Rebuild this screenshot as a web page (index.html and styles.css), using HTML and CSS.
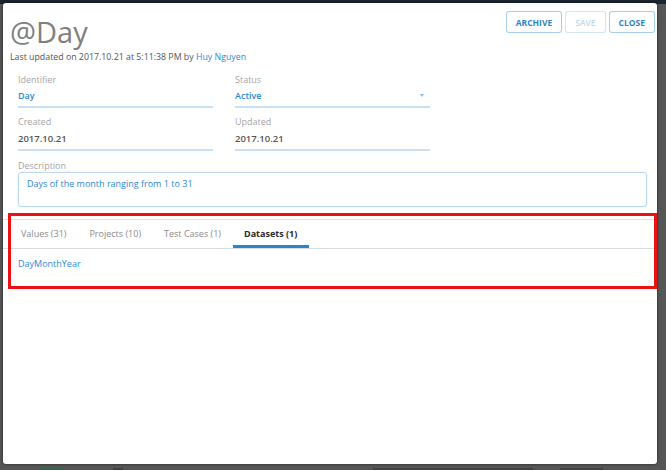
FILE: index.html
```html
<!DOCTYPE html>
<html>
<head>
<meta charset="utf-8">
<link rel="stylesheet" href="styles.css">
</head>
<body>
<div class="page">
  <div class="page-header"></div>
  <div class="page-row">
    <span class="pr-bar pr-status"></span>
    <span class="pr-bar pr-type"></span>
    <span class="pr-bar pr-desc"></span>
    <span class="pr-bar pr-date"></span>
  </div>
</div>

<div class="modal">
  <div class="modal-header">
    <div class="heading">
      <h1 class="title">@Day</h1>
      <p class="meta">Last updated on 2017.10.21 at 5:11:38 PM by <a class="link">Huy Nguyen</a></p>
    </div>
    <div class="actions">
      <button class="btn">ARCHIVE</button>
      <button class="btn btn-disabled">SAVE</button>
      <button class="btn">CLOSE</button>
    </div>
  </div>

  <div class="form">
    <div class="field">
      <div class="label">Identifier</div>
      <div class="value value-blue">Day</div>
    </div>
    <div class="field">
      <div class="label">Status</div>
      <div class="value value-blue select">Active<span class="caret"></span></div>
    </div>
    <div class="spacer"></div>
    <div class="field">
      <div class="label">Created</div>
      <div class="value value-dark">2017.10.21</div>
    </div>
    <div class="field">
      <div class="label">Updated</div>
      <div class="value value-dark">2017.10.21</div>
    </div>
    <div class="spacer"></div>
    <div class="field field-wide">
      <div class="label">Description</div>
      <div class="textarea">Days of the month ranging from 1 to 31</div>
    </div>
  </div>

  <div class="tabs">
    <div class="tab">Values (31)</div>
    <div class="tab">Projects (10)</div>
    <div class="tab">Test Cases (1)</div>
    <div class="tab tab-active">Datasets (1)</div>
  </div>
  <div class="tab-content">
    <a class="link">DayMonthYear</a>
  </div>

  <div class="highlight"></div>
</div>
</body>
</html>
```

FILE: styles.css
```css
html, body {
  margin: 0;
  padding: 0;
}
body {
  width: 666px;
  height: 470px;
  overflow: hidden;
  background: #565656;
  font-family: "Open Sans", "Liberation Sans", sans-serif;
  position: relative;
}
.page {
  height: 470px;
  display: flex;
  flex-direction: column;
}
.page-header {
  height: 4px;
  background: #1a2530;
}
.page-row {
  margin-top: auto;
  height: 4px;
  display: flex;
  align-items: flex-end;
  padding-left: 40px;
}
.pr-bar {
  height: 2px;
  background: #3c3c3c;
  opacity: 0.8;
}
.pr-status { background: #2a6a50; width: 23px; margin-right: 50px; }
.pr-type { width: 10px; margin-right: 250px; }
.pr-desc { width: 160px; margin-right: 27px; }
.pr-date { width: 43px; }

.modal {
  position: absolute;
  left: 3px;
  top: 3px;
  width: 654px;
  height: 461px;
  background: #fff;
  border-radius: 3px;
  box-shadow: 0 0 3px rgba(0,0,0,0.6);
}
.modal-header {
  display: flex;
  justify-content: space-between;
  align-items: flex-start;
  padding: 8px 2px 0 7px;
}
.title {
  margin: 6px 0 0 0;
  font-size: 29px;
  line-height: 29px;
  font-weight: 400;
  color: #808080;
}
.meta {
  margin: 5px 0 0 0;
  font-size: 8.8px;
  line-height: 12px;
  color: #555;
}
.link {
  color: #2d89d3;
  text-decoration: none;
}
.actions {
  display: flex;
  gap: 3px;
}
.btn {
  height: 22px;
  padding: 0 9px;
  border: 1px solid #a9cdee;
  border-radius: 3px;
  background: #fff;
  font-family: "Open Sans", "Liberation Sans", sans-serif;
  font-size: 8.5px;
  font-weight: 700;
  color: #2f86c9;
  box-shadow: 0 0 1px #cfe4f6;
}
.btn-disabled {
  color: #bcd8ef;
  border-color: #d3e6f6;
  font-weight: 600;
  padding: 0 9px;
}

.form {
  display: grid;
  grid-template-columns: 195px 195px 1fr;
  column-gap: 22px;
  row-gap: 8px;
  padding: 0 10px 0 15px;
  margin-top: 10.5px;
}
.field-wide {
  grid-column: 1 / -1;
  margin-top: 1px;
}
.label {
  font-size: 9px;
  line-height: 12px;
  color: #a5a5a5;
}
.value {
  margin-top: 3px;
  font-size: 9px;
  line-height: 14px;
  padding-bottom: 3px;
  border-bottom: 2px solid #c9e0f4;
}
.value-blue {
  color: #2d89d3;
  font-weight: 600;
}
.value-dark {
  margin-top: 4px;
  color: #555;
  font-weight: 600;
  font-size: 9.5px;
}
.select {
  display: flex;
  justify-content: space-between;
  align-items: center;
}
.caret {
  width: 0;
  height: 0;
  margin-right: 6px;
  border-left: 2.5px solid transparent;
  border-right: 2.5px solid transparent;
  border-top: 3px solid #8dbde6;
}
.textarea {
  margin-top: 0;
  height: 23px;
  border: 1px solid #bcd8f0;
  border-radius: 3px;
  padding: 5px 8px;
  font-size: 9px;
  line-height: 12px;
  color: #2d89d3;
  box-shadow: 0 0 2px #d7e8f7;
}

.tabs {
  margin-top: 12px;
  display: flex;
  padding-left: 6.5px;
  border-top: 1px solid #dfe3e7;
  border-bottom: 1px solid #d7dde3;
}
.tab {
  padding: 0 11.5px;
  height: 28px;
  line-height: 28px;
  font-size: 9px;
  color: #8a8a8a;
}
.tab-active {
  color: #2a2a2a;
  font-weight: 700;
  box-shadow: inset 0 -3px 0 #2b86c8;
}
.tab-content {
  padding: 9px 15px;
  font-size: 9px;
  line-height: 12px;
}

.highlight {
  position: absolute;
  left: 5px;
  top: 210px;
  width: 643px;
  height: 70px;
  border: 3px solid #ee1111;
}
```
